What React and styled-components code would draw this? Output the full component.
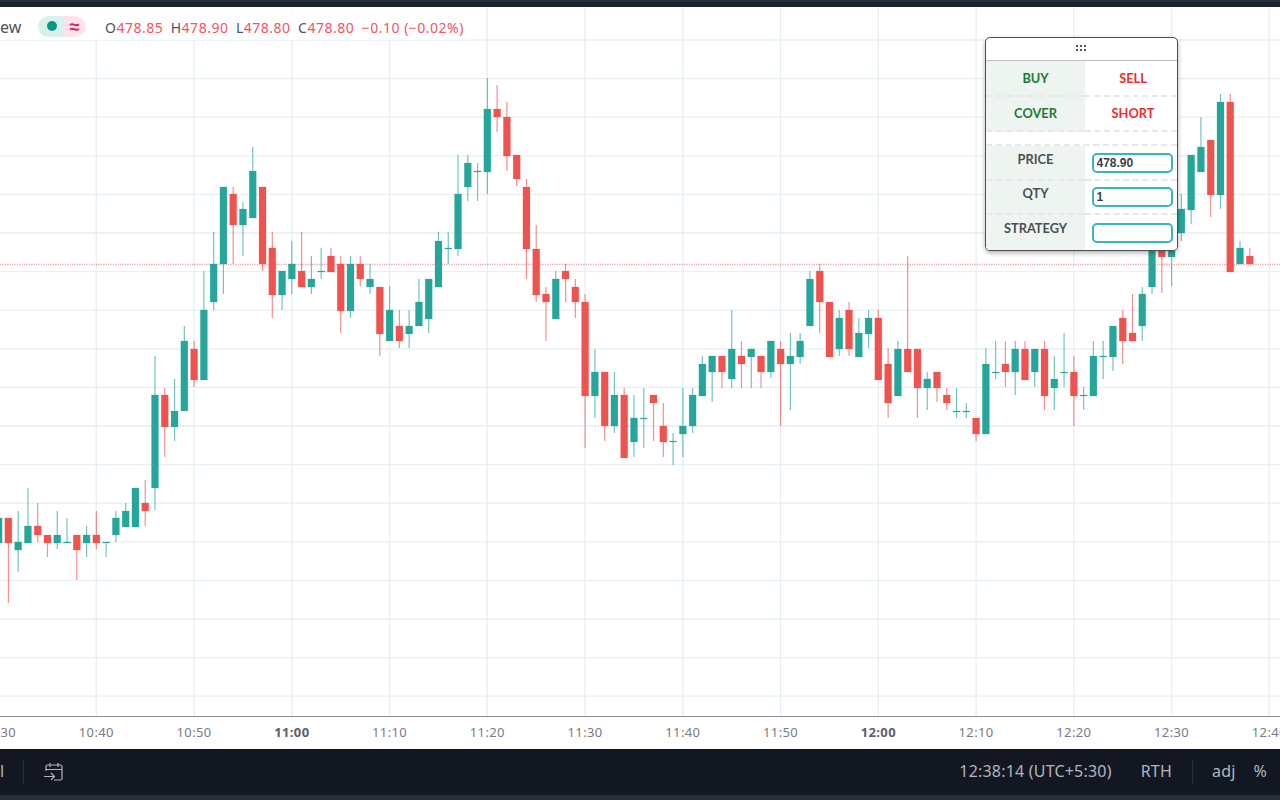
import React from "react";
import styled, { createGlobalStyle } from "styled-components";

const Global = createGlobalStyle`
  html, body { margin: 0; padding: 0; background: #fff; }
  body { width: 1280px; height: 800px; overflow: hidden; font-family: "Noto Sans", sans-serif; }
`;

const Page = styled.div`
  width: 1280px;
  height: 800px;
  display: flex;
  flex-direction: column;
  overflow: hidden;
  background: #fff;
`;
const TopEdge = styled.div`
  height: 7px;
  flex: none;
  background: #1e222d;
  border-top: 2px solid #2a2e39;
  box-sizing: border-box;
`;
const ChartArea = styled.div`
  position: relative;
  flex: none;
  height: 709px;
  border-bottom: 1px solid #8a8d96;
  box-sizing: content-box;
`;
const ChartSvg = styled.svg`
  display: block;
  width: 1280px;
  height: 709px;
`;
const Legend = styled.div`
  position: absolute;
  left: 0;
  top: 0;
  width: 470px;
  height: 33px;
  display: flex;
  align-items: center;
  padding-top: 7px;
  box-sizing: border-box;
  background: rgba(255, 255, 255, 0.82);
  font-size: 14px;
  letter-spacing: 0.5px;
  color: #50535e;
  white-space: nowrap;
`;
const Title = styled.span`
  width: 38px;
  font-size: 16px;
  letter-spacing: 0;
  flex: none;
`;
const Pill = styled.div`
  display: flex;
  width: 48px;
  height: 21px;
  margin-top: -2px;
  border-radius: 11px;
  overflow: hidden;
  flex: none;
`;
const PillHalf = styled.div`
  flex: 1;
  display: flex;
  align-items: center;
  justify-content: center;
  padding-left: ${(p) => p.$pad || 0}px;
  background: ${(p) => p.$bg};
  color: #d81b60;
  font-size: 18px;
  line-height: 21px;
  letter-spacing: 0;
  font-weight: 700;
`;
const Dot = styled.span`
  width: 10px;
  height: 10px;
  border-radius: 50%;
  background: #089981;
`;
const Values = styled.div`
  display: flex;
  margin-left: 19px;
  gap: 7.5px;
`;
const Val = styled.span`
  color: #f7525f;
`;
const Key = styled.span`
  color: #50535e;
`;

const Panel = styled.div`
  position: absolute;
  left: 985px;
  top: 30px;
  width: 193px;
  height: 214px;
  box-sizing: border-box;
  background: #fff;
  border: 1px solid #4a4d52;
  border-radius: 5px;
  box-shadow: 0 2px 5px rgba(0, 0, 0, 0.3);
  overflow: hidden;
  font-family: Lato, sans-serif;
  font-size: 12.8px;
  font-weight: 700;
`;
const Grip = styled.div`
  height: 23px;
  padding-bottom: 1px;
  box-sizing: border-box;
  border-bottom: 1px solid #b9bdc2;
  display: flex;
  align-items: center;
  justify-content: center;
`;
const PanelGrid = styled.div`
  display: grid;
  grid-template-columns: 99px 1fr;
  grid-template-rows: 36px 35px 14px 35px 34px 35px;
`;
const Cell = styled.div`
  display: flex;
  align-items: center;
  justify-content: center;
  background: ${(p) => (p.$left ? "#eef5f0" : "#fff")};
  color: ${(p) => p.$color || "#4a4f55"};
  border-bottom: ${(p) => (p.$last ? "none" : "2px dashed #e6e8ec")};
  padding-bottom: ${(p) => p.$lift || 0}px;
  padding-left: ${(p) => (p.$left ? "0" : "4px")};
  box-sizing: border-box;
`;
const Spacer = styled.div`
  grid-column: 1 / 3;
  border-bottom: 2px dashed #e6e8ec;
  box-sizing: border-box;
`;
const Field = styled.input`
  width: 81px;
  height: 20px;
  box-sizing: border-box;
  margin: 0 0 0 -2px;
  border: 2px solid #3bb5b8;
  border-radius: 5px;
  padding: 0 3px;
  outline: none;
  background: #fff;
  color: #3a3f45;
  font-family: "Liberation Sans", sans-serif;
  font-size: 12px;
  font-weight: 700;
`;

const Axis = styled.div`
  height: 32px;
  flex: none;
  display: flex;
  margin-left: -50.3px;
  align-items: center;
  padding-bottom: 3px;
  box-sizing: border-box;
`;
const Tick = styled.div`
  flex: none;
  width: 97.75px;
  text-align: center;
  font-size: 13px;
  letter-spacing: 0.4px;
  font-weight: ${(p) => (p.$bold ? 700 : 400)};
  color: ${(p) => (p.$bold ? "#5d606b" : "#787b86")};
`;

const Bar = styled.div`
  height: 46px;
  flex: none;
  background: #131722;
  display: flex;
  align-items: center;
  color: #b2b5be;
  font-size: 16px;
  letter-spacing: 0.2px;
  white-space: nowrap;
`;
const Clip = styled.span`
  width: 23px;
  flex: none;
  margin-top: -2px;
  color: #b2b5be;
`;
const Sep = styled.div`
  width: 1px;
  height: 26px;
  background: #2a2e39;
  flex: none;
`;
const CalIcon = styled.svg`
  width: 22px;
  height: 22px;
  margin-left: 19px;
  flex: none;
`;
const Grow = styled.div`
  flex: 1;
`;
const Item = styled.span`
  flex: none;
  margin-top: -2px;
  margin-right: ${(p) => p.$mr || 0}px;
  margin-left: ${(p) => p.$ml || 0}px;
`;
const BottomEdge = styled.div`
  flex: 1;
  background: #2a2e39;
`;

const G = "#26a69a";
const R = "#ef5350";
// [colour, high, bodyTop, bodyBottom, low] – pixel rows read from the chart
const candles = [
  ["g",505,518,543,548],["r",518,518,543,603],["g",511,542,550,572],["g",488,526,543,543],["r",503,526,535,542],
  ["r",535,535,543,557],["g",511,535,543,549],["g",518,542,543,543],["r",535,535,550,580],["g",526,535,543,557],
  ["r",511,535,543,549],["g",543,542,543,557],["g",511,518,535,542],["g",503,511,527,527],["g",488,488,527,527],
  ["r",480,503,511,526],["g",356,395,488,510],["r",388,395,427,457],["g",379,411,427,441],["g",326,341,411,411],
  ["r",341,349,380,387],["g",271,310,380,380],["g",232,264,302,310],["g",187,187,264,294],["r",187,194,225,264],
  ["g",202,209,225,256],["g",147,171,218,218],["r",187,187,264,271],["r",232,248,295,318],["g",271,271,295,310],
  ["g",241,264,279,294],["r",232,271,287,287],["g",256,279,287,294],["g",248,271,272,279],["r",248,256,272,272],
  ["r",256,264,311,333],["g",256,264,311,318],["r",256,264,279,286],["g",264,279,287,294],["r",287,287,334,356],
  ["g",286,310,341,341],["r",310,326,341,348],["g",310,326,334,348],["g",279,302,326,326],["g",279,279,319,333],
  ["g",232,241,287,287],["g",232,248,249,264],["g",155,194,249,256],["g",155,163,187,201],["g",163,171,172,201],
  ["g",78,109,172,194],["r",85,109,117,132],["r",102,117,156,171],["r",155,155,179,186],["r",179,187,249,279],
  ["r",225,249,295,302],["r",287,294,302,341],["g",271,279,319,319],["r",264,271,279,302],["r",279,287,302,318],
  ["r",294,302,396,448],["g",349,372,396,418],["r",372,372,426,441],["g",372,395,426,433],["r",388,395,458,458],
  ["g",395,418,442,457],["g",388,418,419,448],["r",395,395,403,441],["r",403,426,442,457],["g",433,441,442,465],
  ["g",388,426,434,457],["g",388,395,426,433],["g",356,364,396,396],["g",356,356,372,402],["r",356,356,372,388],
  ["g",310,349,379,388],["r",341,356,364,388],["g",349,349,357,388],["r",356,356,372,388],["g",341,341,372,378],
  ["r",341,349,364,426],["g",333,356,364,410],["g",333,341,357,364],["g",271,279,326,326],["r",264,271,302,333],
  ["r",302,302,357,357],["g",310,318,349,356],["r",302,310,349,356],["g",318,333,357,357],["g",310,318,334,348],
  ["r",310,318,380,380],["r",348,364,403,418],["g",341,349,396,396],["r",256,349,372,372],["r",349,349,388,418],
  ["g",372,379,388,410],["r",372,372,388,402],["r",388,395,403,410],["g",388,411,412,418],["g",403,411,412,418],
  ["r",418,418,434,441],["g",348,364,434,434],["g",341,372,373,379],["r",341,364,372,387],["g",341,349,372,395],
  ["r",341,349,380,380],["g",349,349,372,387],["r",341,349,396,410],["g",356,379,388,410],["g",333,372,373,387],
  ["r",356,372,396,426],["g",387,395,396,410],["g",341,356,396,396],["g",341,356,357,379],["g",326,326,357,371],
  ["r",310,318,341,364],["r",294,333,341,341],["g",287,294,326,341],["g",240,250,287,294],["r",240,250,257,293],
  ["g",240,250,257,286],["g",194,209,233,241],["g",155,155,210,224],["g",117,147,172,172],["r",140,140,195,217],
  ["g",94,102,195,209],["r",94,102,272,272],["g",241,248,264,264],["r",248,256,264,264],
];
const xOf = (i) => -1.4 + i * 9.775;
const hLines = Array.from({ length: 18 }, (_, i) => 40 + i * 38.6);
const vLines = Array.from({ length: 13 }, (_, i) => 96.3 + i * 97.75);
const ticks = ["10:30","10:40","10:50","11:00","11:10","11:20","11:30","11:40","11:50","12:00","12:10","12:20","12:30","12:40"];

const Candle = ({ c, i }) => {
  const [k, h, t, b, l] = c;
  const col = k === "g" ? G : R;
  const x = xOf(i);
  return (
    <g>
      {t > h && <line x1={x} x2={x} y1={h} y2={t} stroke={col} strokeWidth="1.2" strokeOpacity="0.65" />}
      {l > b && <line x1={x} x2={x} y1={b} y2={l} stroke={col} strokeWidth="1.2" strokeOpacity="0.65" />}
      <rect x={x - 3.5} y={t} width="7" height={Math.max(b - t, 1)} fill={col} stroke={col} strokeOpacity="0.25" strokeWidth="0.8" />
    </g>
  );
};

export default function App() {
  return (
    <Page>
      <Global />
      <TopEdge />
      <ChartArea>
        <ChartSvg viewBox="0 7 1280 709">
          {hLines.map((y) => (
            <line key={y} x1="0" x2="1280" y1={y} y2={y} stroke="#e6eff3" strokeWidth="1.3" />
          ))}
          {vLines.map((x) => (
            <line key={x} x1={x} x2={x} y1="7" y2="716" stroke="#e6eff3" strokeWidth="1.3" />
          ))}
          <line x1="0" x2="1280" y1="264.5" y2="264.5" stroke={R} strokeOpacity="0.55" strokeWidth="1.3" strokeDasharray="1.2 1.2" />
          {candles.map((c, i) => (
            <Candle key={i} c={c} i={i} />
          ))}
        </ChartSvg>
        <Legend>
          <Title>ew</Title>
          <Pill>
            <PillHalf $bg="#d9f1ec" $pad={3}><Dot /></PillHalf>
            <PillHalf $bg="#fce3ec">≈</PillHalf>
          </Pill>
          <Values>
            <span><Key>O</Key><Val>478.85</Val></span>
            <span><Key>H</Key><Val>478.90</Val></span>
            <span><Key>L</Key><Val>478.80</Val></span>
            <span><Key>C</Key><Val>478.80</Val></span>
            <Val>−0.10 (−0.02%)</Val>
          </Values>
        </Legend>
        <Panel>
          <Grip>
            <svg width="11" height="7" viewBox="0 0 11 7">
              {[0, 4, 8].flatMap((x) =>
                [0, 4].map((y) => <rect key={`${x}${y}`} x={x} y={y} width="2" height="2" fill="#555" />)
              )}
            </svg>
          </Grip>
          <PanelGrid>
            <Cell $left $color="#1a7a37">BUY</Cell>
            <Cell $color="#f02b30">SELL</Cell>
            <Cell $left $color="#1a7a37" $lift={2}>COVER</Cell>
            <Cell $color="#f02b30" $lift={2}>SHORT</Cell>
            <Spacer />
            <Cell $left $lift={8}>PRICE</Cell>
            <Cell><Field readOnly value="478.90" /></Cell>
            <Cell $left $lift={8}>QTY</Cell>
            <Cell><Field readOnly value="1" /></Cell>
            <Cell $left $lift={10} $last>STRATEGY</Cell>
            <Cell $last><Field readOnly value="" /></Cell>
          </PanelGrid>
        </Panel>
      </ChartArea>
      <Axis>
        {ticks.map((t) => (
          <Tick key={t} $bold={t === "11:00" || t === "12:00"}>{t}</Tick>
        ))}
      </Axis>
      <Bar>
        <Clip>l</Clip>
        <Sep />
        <CalIcon viewBox="0 0 22 22" fill="none" stroke="#b2b5be" strokeWidth="1.2">
          <path d="M3 10V5.5A1.5 1.5 0 0 1 4.5 4h13A1.5 1.5 0 0 1 19 5.5v12a1.5 1.5 0 0 1-1.5 1.5H11" />
          <path d="M3 8.5h16M7 2v4M15 2v4" />
          <path d="M1 15.5h10M8 12l3.5 3.5L8 19" />
        </CalIcon>
        <Grow />
        <Item $mr={29}>12:38:14 (UTC+5:30)</Item>
        <Item $mr={20}>RTH</Item>
        <Sep />
        <Item $ml={19}>adj</Item>
        <Item $ml={18} $mr={13}>%</Item>
      </Bar>
      <BottomEdge />
    </Page>
  );
}
